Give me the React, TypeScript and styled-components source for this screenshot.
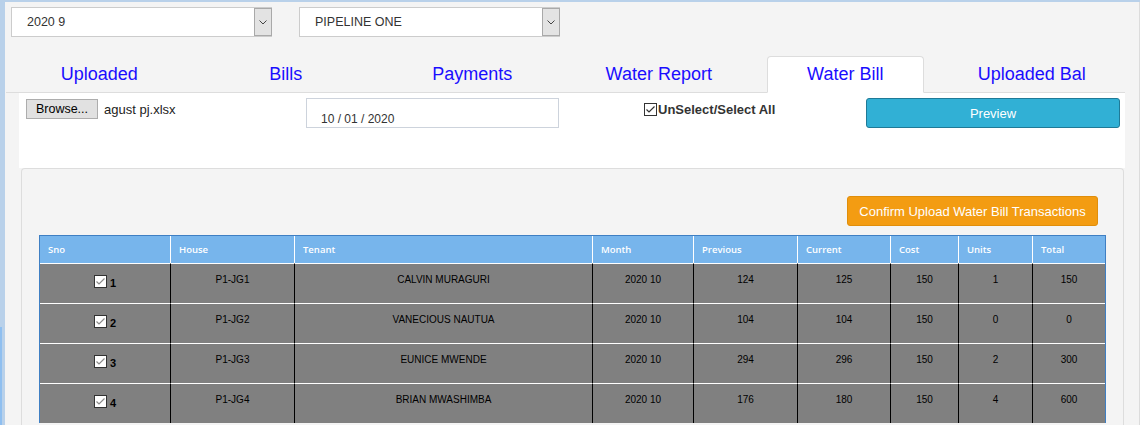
import React from "react";
import styled, { createGlobalStyle } from "styled-components";

const GlobalStyle = createGlobalStyle`
  html, body { margin: 0; padding: 0; background: #f4f4f4; }
  body { font-family: "Liberation Sans", Arial, sans-serif; }
  * { box-sizing: border-box; }
`;

const Frame = styled.div`
  display: flex;
  height: 425px;
  overflow: hidden;
  border-top: 2px solid #b9d1ea;
  background: #f4f4f4;
`;

const SideStrip = styled.div`
  flex: 0 0 5px;
  background: linear-gradient(to right, #8fbff0 2px, transparent 2px) 0 325px / 100% 100% no-repeat, #b9d1ea;
`;

const Main = styled.div`
  flex: 0 0 1135px;
  display: flex;
  flex-direction: column;
  border-right: 1px solid #dcdcdc;
`;

const SelectRow = styled.div`
  display: flex;
  gap: 27px;
  padding: 5px 0 0 6px;
`;

const Select = styled.div`
  display: flex;
  align-items: stretch;
  width: 261px;
  height: 30px;
  background: #fff;
  border: 1px solid #cccccc;
`;

const SelectLabel = styled.span`
  flex: 1;
  display: flex;
  align-items: center;
  padding-left: 15px;
  font-size: 12.5px;
  color: #333;
`;

const SelectArrow = styled.span`
  flex: 0 0 18px;
  display: flex;
  align-items: center;
  justify-content: center;
  background: #e3e3e3;
  border: 1px solid #a9a9a9;
  margin-right: -1px;
`;

const Tabs = styled.ul`
  display: flex;
  list-style: none;
  margin: 19px 14px 0 1px;
  padding: 0;
  border-bottom: 1px solid #dddddd;
`;

const TabItem = styled.li`
  flex: 1;
  display: flex;
  margin-bottom: -1px;
`;

const TabLink = styled.a<{ $active?: boolean }>`
  flex: 1;
  margin: 0 15px;
  padding: 7px 0 8px;
  line-height: 20px;
  font-size: 18px;
  text-align: center;
  color: #1a0dff;
  text-decoration: none;
  border: 1px solid ${(p) => (p.$active ? "#dddddd" : "transparent")};
  border-bottom-color: transparent;
  border-radius: 4px 4px 0 0;
  background: ${(p) => (p.$active ? "#ffffff" : "transparent")};
`;

const WhitePanel = styled.div`
  height: 75px;
  margin: 0 14px;
  background: #fff;
  padding: 5px 0 0 7px;
  display: grid;
  grid-template-columns: 280px 338px 222px 254px;
  align-items: start;
`;

const FileGroup = styled.div`
  display: flex;
  align-items: center;
  gap: 6px;
  margin-top: 1px;
`;

const BrowseButton = styled.button`
  width: 72px;
  height: 20px;
  padding: 0;
  background: #e1e1e1;
  border: 1px solid #adadad;
  font-family: "Liberation Sans", Arial, sans-serif;
  font-size: 12.5px;
  color: #000;
`;

const FileName = styled.span`
  font-size: 13px;
  color: #222;
`;

const DateBox = styled.div`
  width: 253px;
  height: 30px;
  border: 1px solid #cdd3dc;
  padding: 13px 0 0 14px;
  font-size: 12px;
  color: #333;
`;

const SelectAll = styled.label`
  display: flex;
  align-items: center;
  gap: 1px;
  margin-top: 4px;
  font-size: 13px;
  font-weight: bold;
  color: #333;
`;

const PreviewButton = styled.button`
  width: 254px;
  height: 30px;
  background: #31b0d5;
  border: 1px solid #1f7a97;
  border-radius: 3px;
  color: #fff;
  font-family: "Liberation Sans", Arial, sans-serif;
  font-size: 13px;
`;

const GreyPanel = styled.div`
  flex: 1;
  margin: 0 15px 0 16px;
  background: #f4f4f4;
  border: 1px solid #dddddd;
  border-bottom: none;
  border-radius: 4px 4px 0 0;
  padding: 27px 17px 0 17px;
`;

const ConfirmRow = styled.div`
  display: flex;
  justify-content: flex-end;
  padding-right: 8px;
  margin-bottom: 9px;
`;

const ConfirmButton = styled.button`
  width: 251px;
  height: 30px;
  background: #f39c12;
  border: 1px solid #e08e0b;
  border-radius: 3px;
  color: #fff;
  font-family: "Liberation Sans", Arial, sans-serif;
  font-size: 13px;
`;

const Table = styled.table`
  width: 1067px;
  table-layout: fixed;
  border-collapse: separate;
  border-spacing: 0;
  border: 1px solid #3f7fc3;
  border-bottom: none;
`;

const Th = styled.th<{ $w: number }>`
  width: ${(p) => p.$w}px;
  height: 27px;
  padding: 0 8px;
  background: #77b5ec;
  color: #fff;
  font-family: "Open Sans", "Liberation Sans", sans-serif;
  font-weight: 600;
  font-size: 9.5px;
  text-align: left;
  vertical-align: middle;
  & + & { border-left: 1px solid #fff; }
`;

const Td = styled.td`
  height: 40px;
  padding: 10px 4px 0;
  background: #808080;
  border-top: 1px solid #fff;
  color: #000;
  font-size: 10px;
  text-align: center;
  vertical-align: top;
  & + & { border-left: 1px solid #000; }
`;

const SnoWrap = styled.div`
  display: flex;
  justify-content: center;
  align-items: flex-end;
  gap: 3px;
  margin-top: 1px;
`;

const SnoNum = styled.span`
  font-size: 11px;
  line-height: 9px;
  font-weight: bold;
`;

const Chevron = () => (
  <svg width="8" height="5" viewBox="0 0 8 5">
    <polyline points="0.5,0.5 4,4 7.5,0.5" fill="none" stroke="#444" strokeWidth="1" />
  </svg>
);

const CheckBox = ({ mark }: { mark: string }) => (
  <svg width="13" height="13" viewBox="0 0 13 13">
    <rect x="0.5" y="0.5" width="12" height="12" fill="#fff" stroke="#333" />
    <polyline points="2.5,6.5 5,9 10.5,3.5" fill="none" stroke={mark} strokeWidth="1.2" />
  </svg>
);

const tabs = ["Uploaded", "Bills", "Payments", "Water Report", "Water Bill", "Uploaded Bal"];

const columns: [string, number][] = [
  ["Sno", 130],
  ["House", 124],
  ["Tenant", 298],
  ["Month", 101],
  ["Previous", 104],
  ["Current", 93],
  ["Cost", 68],
  ["Units", 74],
  ["Total", 73],
];

const rows = [
  { sno: 1, house: "P1-JG1", tenant: "CALVIN MURAGURI", month: "2020 10", prev: 124, cur: 125, cost: 150, units: 1, total: 150 },
  { sno: 2, house: "P1-JG2", tenant: "VANECIOUS NAUTUA", month: "2020 10", prev: 104, cur: 104, cost: 150, units: 0, total: 0 },
  { sno: 3, house: "P1-JG3", tenant: "EUNICE MWENDE", month: "2020 10", prev: 294, cur: 296, cost: 150, units: 2, total: 300 },
  { sno: 4, house: "P1-JG4", tenant: "BRIAN MWASHIMBA", month: "2020 10", prev: 176, cur: 180, cost: 150, units: 4, total: 600 },
];

export default function App() {
  return (
    <>
      <GlobalStyle />
      <Frame>
        <SideStrip />
        <Main>
          <SelectRow>
            <Select>
              <SelectLabel>2020 9</SelectLabel>
              <SelectArrow><Chevron /></SelectArrow>
            </Select>
            <Select>
              <SelectLabel>PIPELINE ONE</SelectLabel>
              <SelectArrow><Chevron /></SelectArrow>
            </Select>
          </SelectRow>
          <Tabs>
            {tabs.map((t) => (
              <TabItem key={t}>
                <TabLink $active={t === "Water Bill"}>{t}</TabLink>
              </TabItem>
            ))}
          </Tabs>
          <WhitePanel>
            <FileGroup>
              <BrowseButton>Browse...</BrowseButton>
              <FileName>agust pj.xlsx</FileName>
            </FileGroup>
            <DateBox>10 / 01 / 2020</DateBox>
            <SelectAll>
              <CheckBox mark="#333" />
              UnSelect/Select All
            </SelectAll>
            <PreviewButton>Preview</PreviewButton>
          </WhitePanel>
          <GreyPanel>
            <ConfirmRow>
              <ConfirmButton>Confirm Upload Water Bill Transactions</ConfirmButton>
            </ConfirmRow>
            <Table>
              <thead>
                <tr>
                  {columns.map(([name, w]) => (
                    <Th key={name} $w={w}>{name}</Th>
                  ))}
                </tr>
              </thead>
              <tbody>
                {rows.map((r) => (
                  <tr key={r.sno}>
                    <Td>
                      <SnoWrap>
                        <CheckBox mark="#8a8a8a" />
                        <SnoNum>{r.sno}</SnoNum>
                      </SnoWrap>
                    </Td>
                    <Td>{r.house}</Td>
                    <Td>{r.tenant}</Td>
                    <Td>{r.month}</Td>
                    <Td>{r.prev}</Td>
                    <Td>{r.cur}</Td>
                    <Td>{r.cost}</Td>
                    <Td>{r.units}</Td>
                    <Td>{r.total}</Td>
                  </tr>
                ))}
              </tbody>
            </Table>
          </GreyPanel>
        </Main>
      </Frame>
    </>
  );
}
